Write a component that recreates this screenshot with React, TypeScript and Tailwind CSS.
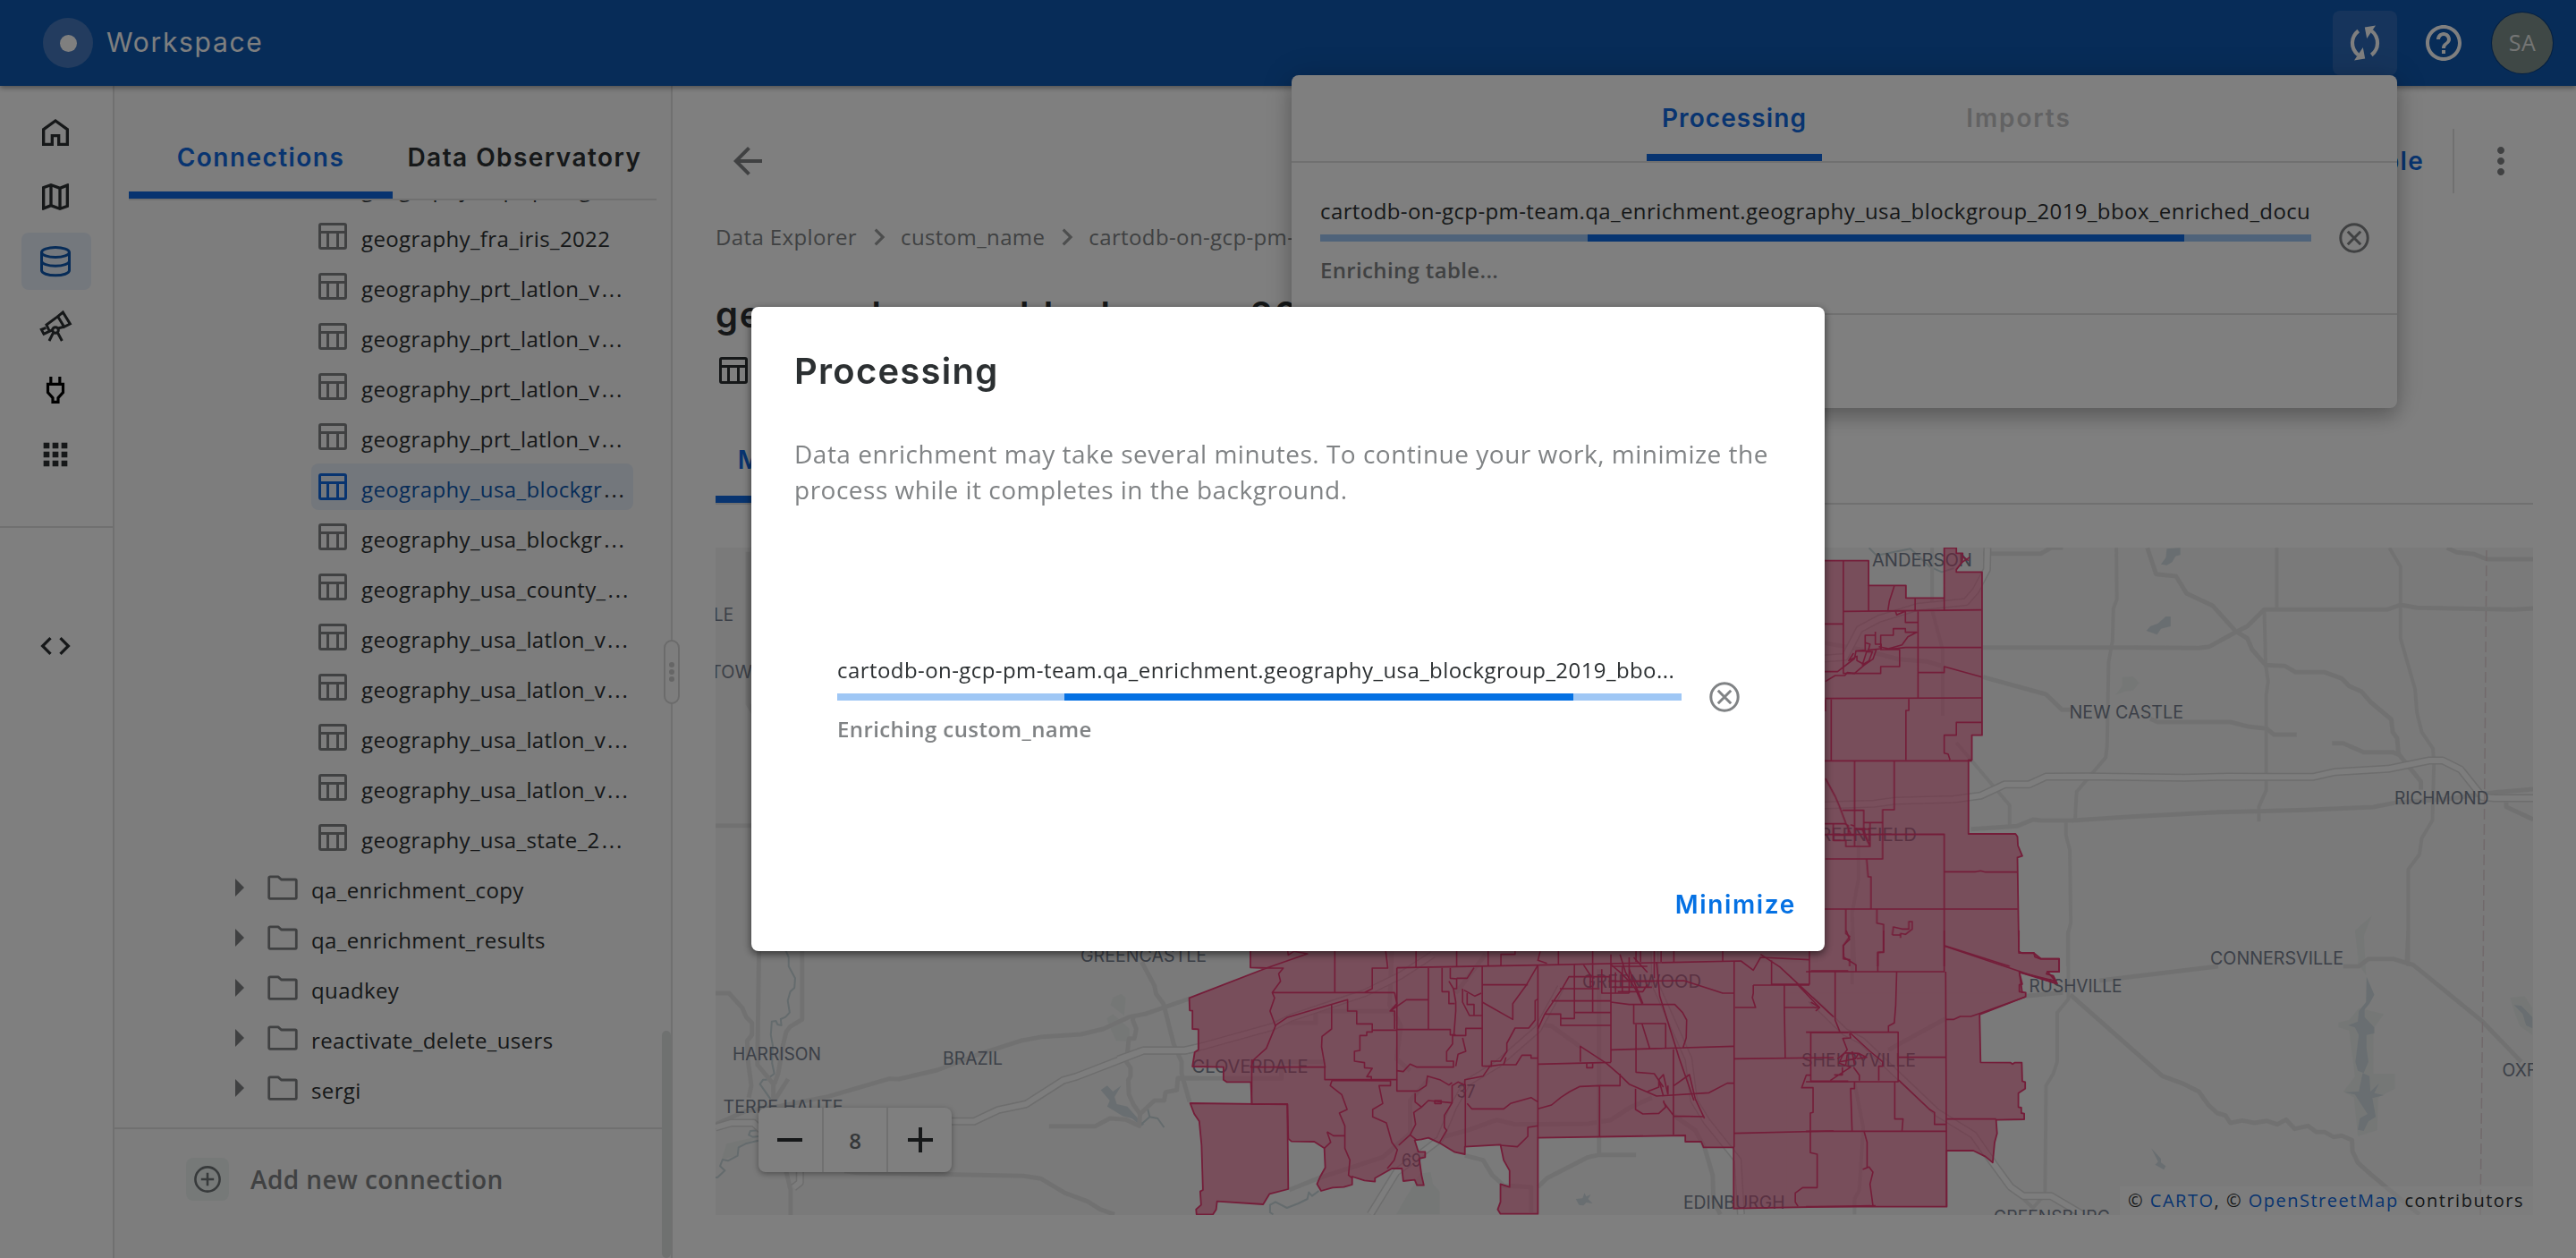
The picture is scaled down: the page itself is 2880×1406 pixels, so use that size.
import type { ReactNode } from 'react';

const P = {
  map: 'M20.5 3l-.16.03L15 5.1 9 3 3.36 4.9c-.21.07-.36.25-.36.48V20.5c0 .28.22.5.5.5l.16-.03L9 18.9l6 2.1 5.64-1.9c.21-.07.36-.25.36-.48V3.5c0-.28-.22-.5-.5-.5zM10 5.47l4 1.4v11.66l-4-1.4V5.47zm-5 .99l3-1.01v11.7l-3 1.16V6.46zm14 11.08l-3 1.01V6.86l3-1.16v11.84z',
  apps: 'M4 8h4V4H4v4zm6 12h4v-4h-4v4zm-6 0h4v-4H4v4zm0-6h4v-4H4v4zm6 0h4v-4h-4v4zm6-10v4h4V4h-4zm-6 4h4V4h-4v4zm6 6h4v-4h-4v4zm0 6h4v-4h-4v4z',
  code: 'M9.4 16.6L4.8 12l4.6-4.6L8 6l-6 6 6 6 1.4-1.4zm5.2 0l4.6-4.6-4.6-4.6L16 6l6 6-6 6-1.4-1.4z',
  help: 'M11 18h2v-2h-2v2zm1-16C6.48 2 2 6.48 2 12s4.48 10 10 10 10-4.48 10-10S17.52 2 12 2zm0 18c-4.41 0-8-3.59-8-8s3.59-8 8-8 8 3.59 8 8-3.59 8-8 8zm0-14c-2.21 0-4 1.79-4 4h2c0-1.1.9-2 2-2s2 .9 2 2c0 2-3 1.75-3 5h2c0-2.25 3-2.5 3-5 0-2.21-1.79-4-4-4z',
  back: 'M20 11H7.83l5.59-5.59L12 4l-8 8 8 8 1.41-1.41L7.83 13H20v-2z',
  chevron: 'M10 6L8.59 7.41 13.17 12l-4.58 4.59L10 18l6-6z',
  more: 'M12 8c1.1 0 2-.9 2-2s-.9-2-2-2-2 .9-2 2 .9 2 2 2zm0 2c-1.1 0-2 .9-2 2s.9 2 2 2 2-.9 2-2-.9-2-2-2zm0 6c-1.1 0-2 .9-2 2s.9 2 2 2 2-.9 2-2-.9-2-2-2z',
};

function Icon({ d, className }: { d: string; className: string }) {
  return (
    <svg viewBox="0 0 24 24" fill="currentColor" className={className}>
      <path d={d} />
    </svg>
  );
}

function CancelIcon() {
  return (
    <svg viewBox="0 0 40 40" fill="none" stroke="currentColor" strokeWidth="3" className="ml-7 mt-7 size-10 text-[#808385]">
      <circle cx="20" cy="20" r="15.200" />
      <path d="M12.800 12.800L27.200 27.200M27.200 12.800L12.800 27.200" />
    </svg>
  );
}

function TableIcon({ className }: { className: string }) {
  return (
    <svg viewBox="0 0 32 30" fill="none" stroke="currentColor" strokeWidth="3" className={className}>
      <rect x="1.5" y="1.5" width="29" height="27" rx="1.5" />
      <path d="M1.5 10.5H30.5M10.5 10.5V28.5M21.5 10.5V28.5" />
    </svg>
  );
}

function FolderIcon() {
  return (
    <svg viewBox="0 0 34 28" fill="none" stroke="currentColor" strokeWidth="2.8" strokeLinejoin="round" className="h-7 w-[34px] shrink-0 text-[#808385]">
      <path d="M3 1.9H12L15.5 5H31A1.3 1.3 0 0 1 32.3 6.3V25A1.3 1.3 0 0 1 31 26.3H3A1.3 1.3 0 0 1 1.7 25V3.2A1.3 1.3 0 0 1 3 1.9Z" />
    </svg>
  );
}

function RailItem({ children, active }: { children: ReactNode; active?: boolean }) {
  return (
    <div className="flex h-[72px] items-center pl-6">
      <div className={active ? 'flex h-16 w-[78px] items-center rounded-lg bg-[#e9f0fb] pl-[18px] text-[#0e58b0]' : 'flex h-16 w-[78px] items-center pl-[18px] text-[#2c3032]'}>
        {children}
      </div>
    </div>
  );
}

function Rail() {
  return (
    <nav className="w-32 shrink-0 border-r-2 border-[#e0e0e0] bg-white pt-4">
      <RailItem>
        <svg viewBox="0 0 24 24" fill="none" stroke="currentColor" strokeWidth="2" className="size-10">
          <path d="M4 20V10L12 4.2L20 10V20H14.2V14.2H9.8V20Z" />
        </svg>
      </RailItem>
      <RailItem>
        <Icon d={P.map} className="size-10" />
      </RailItem>
      <RailItem active>
        <svg viewBox="126 96 120 120" fill="none" stroke="currentColor" strokeWidth="9" className="size-10">
          <ellipse cx="186" cy="126" rx="46.500" ry="16.500" />
          <path d="M139.500 126V187A46.500 16.500 0 0 0 232.500 187V126M139.500 155A46.500 16.500 0 0 0 232.500 155" />
        </svg>
      </RailItem>
      <RailItem>
        <svg viewBox="126 312 120 120" fill="none" stroke="currentColor" strokeWidth="9" className="size-10">
          <path d="M194 341L211 327L235 366L215 376ZM194 341L156 369L166 391L177 386M196 380L215 376M154 379L139 385L147 400L165 391M178 397L165 423M194 397L208 423" />
          <circle cx="186" cy="387" r="10" />
        </svg>
      </RailItem>
      <RailItem>
        <svg viewBox="126 528 120 120" fill="none" stroke="#000" strokeWidth="9.500" className="size-10">
          <path d="M170.500 543V568M200.500 543V568M160.500 568H211.500V596L195 614V628H177V614L160.500 596Z" />
        </svg>
      </RailItem>
      <RailItem>
        <Icon d={P.apps} className="size-10" />
      </RailItem>
      <div className="mt-11 h-0.5 bg-[#e0e0e0]" />
      <div className="mt-24">
        <RailItem>
          <Icon d={P.code} className="size-10" />
        </RailItem>
      </div>
    </nav>
  );
}

const tables = [
  'geography_esp_ip_cog',
  'geography_fra_iris_2022',
  'geography_prt_latlon_v...',
  'geography_prt_latlon_v...',
  'geography_prt_latlon_v...',
  'geography_prt_latlon_v...',
  'geography_usa_blockgr...',
  'geography_usa_blockgr...',
  'geography_usa_county_...',
  'geography_usa_latlon_v...',
  'geography_usa_latlon_v...',
  'geography_usa_latlon_v...',
  'geography_usa_latlon_v...',
  'geography_usa_state_2...',
];
const folders = ['qa_enrichment_copy', 'qa_enrichment_results', 'quadkey', 'reactivate_delete_users', 'sergi'];

function Tree() {
  return (
    <aside className="relative flex w-[624px] shrink-0 flex-col border-r-2 border-[#e0e0e0] bg-[#fafafa]">
      <div className="ml-4 flex h-32 w-[590px] items-end border-b-2 border-[#e0e0e0] font-['Inter',sans-serif] text-[28px] font-semibold leading-10">
        <div className="h-[66px] w-[295px] border-b-8 border-[#1069e0] text-center tracking-[1.45px] text-[#1069e0]">Connections</div>
        <div className="h-[66px] w-[295px] text-center tracking-[1.45px] text-[#2c3032]">Data Observatory</div>
      </div>
      <div className="h-[1036px] overflow-hidden text-2xl tracking-[0.38px] text-[#2c3032]">
        <div className="-mt-11">
          {tables.map((t, i) => {
            const selected = i === 6;
            const cut = t.endsWith('...');
            return (
              <div key={i} className="flex h-14 items-center pl-[220px]">
                <div className={selected ? 'flex h-[52px] w-[360px] items-center gap-4 rounded-lg bg-[#e7eef8] pl-2' : 'flex h-[52px] w-[360px] items-center gap-4 pl-2'}>
                  <TableIcon className={selected ? 'h-[30px] w-8 shrink-0 text-[#1069e0]' : 'h-[30px] w-8 shrink-0 text-[#808385]'} />
                  <span className="mt-1.5 whitespace-nowrap leading-9">
                    <span className={selected ? 'text-[#0e58b0]' : ''}>{cut ? t.slice(0, -3) : t}</span>
                    {cut && <span className="ml-0.5 tracking-[1.9px]">...</span>}
                  </span>
                </div>
              </div>
            );
          })}
          {folders.map((f) => (
            <div key={f} className="flex h-14 items-center pl-[135px]">
              <div className="h-0 w-0 border-y-10 border-l-10 border-y-transparent border-l-[#808385]" />
              <div className="ml-[26px] flex items-center gap-[15px]">
                <FolderIcon />
                <span className="mt-1.5 leading-9">{f}</span>
              </div>
            </div>
          ))}
        </div>
      </div>
      <div className="h-0.5 shrink-0 bg-[#e0e0e0]" />
      <div className="mt-8 flex items-center pl-20">
        <div className="flex size-12 items-center justify-center rounded-lg bg-[#edf2f1] text-[#6f7577]">
          <svg viewBox="0 0 30 30" fill="none" stroke="currentColor" strokeWidth="2.6" className="size-[30px]">
            <circle cx="15" cy="15" r="13.600" />
            <path d="M15 7.800V22.200M7.800 15H22.200" />
          </svg>
        </div>
        <span className="ml-6 text-[28px] font-semibold leading-10 tracking-[0.42px] text-[#808385]">Add new connection</span>
      </div>
      <div className="absolute bottom-0 right-0 h-[254px] w-2.5 rounded-full bg-[#dfe2e1]" />
      <div className="absolute -right-2.5 top-[619px] z-10 flex h-[72px] w-[18px] flex-col items-center justify-center gap-0.5 rounded-full border-2 border-[#d6d6d6] bg-[#fafafa]">
        <div className="size-1.5 rounded-full bg-[#ccc]" />
        <div className="size-1.5 rounded-full bg-[#ccc]" />
        <div className="size-1.5 rounded-full bg-[#ccc]" />
      </div>
    </aside>
  );
}

/* Each map sheet is digitised on its own grid; the matrix places it on the shared canvas. */
const NE = 'matrix(0.5421 0 0 0.33333 2030 600)';
const SE = 'matrix(0.5421 0 0 0.33333 2030 1040)';
const SC = 'matrix(0.5102 0 0 0.33333 1250 1050)';
const SW = 'matrix(0.35714 0 0 0.33333 780 1040)';
const NW = 'matrix(0.8036 0 0 0.33333 800 600)';

const areas: [string, string][] = [
  [SC, 'M290 20V94L325 96L156 196L157 238L163 239V300L176 301V370L168 378L163 426L231 428V470L238 478H291L293 552H371L373 668L380 677L430 678L452 700L454 765L443 795L436 820L445 843L470 832L495 830L513 822V795L540 808L563 812V800L600 768H622L625 810L650 806L655 824H670L665 790L660 735L673 730V712H658L650 673L665 670L680 665L704 682L738 713L760 720V695L838 688L845 740L858 775V830L838 820V880L832 905L838 920H920V665L1243 657V678H1278L1283 697H1349V902L1660 893V20Z'],
  [SC, 'M158 549L371 553L373 837L332 853L318 888L217 878L215 905L208 922H172L171 905L182 890L180 845L186 840L183 690L178 610L167 585Z'],
  [SE, 'M-60 0H419V70L425 76H450L465 95H502V138H478L476 145L490 152L498 178L420 140L426 180L420 182V205L433 208V222L338 282L340 442L402 443L406 448L410 443H425L426 505L432 508V530L418 545V592L424 594V612L430 614V633L372 635L374 680L369 710L365 778L350 758L325 738H270V926L-60 926Z'],
  [NE, 'M-60 80H109V163H186V205H265V37H290V55H303L302 85L290 110V118H343V665H322V748H315V996H412L416 1005L417 1035L426 1070L416 1075L419 1395H450L452 1408L463 1415H502V1458H478L495 1490L420 1460L426 1530H-60Z'],
];

const borders: [string, string][] = [
  [SC, 'M370 20L373 52L385 40L415 48L325 96H362L352 115L356 140L338 178L343 196L333 240L345 290L325 365L298 402L291 428H453M475 20V178M338 178H606M585 20L591 96H557V165L540 178M293 402V552M453 428V470H611V95M611 95L920 86M653 20V92M742 20V90M811 20V88M839 88V50H870V20M680 95V302M611 302H728V320H740'],
  [SC, 'M343 290L370 262L503 202V240H523V283H557V304H611M468 220V300L447 325L446 360L454 430M606 178L611 215L596 240H606V300M596 240L632 202H680M557 304V310H545V322H530V372L518 375V408L540 413V430L557 432L545 460H555V470'],
  [SC, 'M611 440L625 443L640 418L655 428H735V408H720V376L733 350V322H762V298H798M798 90V424L818 425V408L838 408L852 375V348L870 297H900L914 270V205L920 200M798 152H898M798 210L865 268V215L895 152L920 86M735 165L740 210V240L736 320M755 330L762 375L745 385L740 425'],
  [SC, 'M728 95V130L742 132V165H735L725 140M710 95V175H725V215H738M755 165V210L770 255H798M758 170L782 190L796 180M765 180V218H780V255M780 95L765 130H742'],
  [SC, 'M469 472L597 474V490H572L580 550L558 570V595L588 615L600 680L612 705L605 740L590 768M469 472L465 490L490 520L502 570L485 582L497 625V700L508 740L505 790L513 800M458 645L466 680L452 700M458 645L472 658H497M611 470V508H657'],
  [SC, 'M657 508L675 490L678 458L705 470L725 488L732 480M651 515V545L665 562L680 540L732 548V490L745 478L760 488V470L800 458L815 425L838 420H872L885 388H905V398H920M665 562L648 580L652 620L640 655L615 690M732 548L715 590V630L720 640L704 682M640 655L655 673'],
  [SC, 'M761 485V695M765 550L775 568H845L860 550L905 530L920 545M838 690L875 695L898 660V630L920 625M920 86V665M920 86L1365 72L1392 103L1408 60L1515 68M845 420L850 395M694 540H708V550H694Z'],
  [SC, 'M920 418L1080 412M1080 84V412M920 300L935 250L975 160L988 125H1080M935 250H970V288H1080M970 265H1000V85M950 206H1080M968 165H1055M1000 245H1080M1040 85V245M1020 85L1035 120V160M1060 100V180H1120M1080 50V95'],
  [SC, 'M1013 410V358L1070 415L1100 455L1120 485L1180 525L1295 514L1335 482H1350M1027 415V430H1040V415M1100 450V490H1055L1012 493L990 510L970 530L950 555L920 568M1055 493V660'],
  [SC, 'M1080 370L1350 358M1080 84L1100 110L1120 140L1240 138L1295 165L1325 180H1350M1080 210L1120 218H1220L1237 245L1246 270L1245 330L1238 363M1120 100L1150 215M1100 50L1112 110L1135 170L1148 215M1130 215V282H1200V365M1148 282L1165 365M1135 285V445L1175 450L1195 495M1130 60L1160 110'],
  [SC, 'M1350 72V697M1350 400L1568 396M1217 368V655M1350 650L1568 642M1134 500V570L1150 585L1185 583L1200 562L1195 540M1195 525L1185 470L1195 453L1205 520M1205 490V520M1218 490L1252 453L1265 535L1285 600M1218 592L1285 594M1160 510L1185 495L1185 470M1195 545L1218 592'],
  [SC, 'M1082 90H1160M1090 110V180M1105 90V175M1120 60V180M1075 140H1175M1085 160H1170M1095 175H1150L1160 150M1180 75L1187 190L1230 400L1262 540M1175 20V130M1145 20V75M1190 20V75M1218 20V75M1325 20V72M1135 20V75M1040 20V85M965 20V85M925 40L920 70L940 80'],
  [SC, 'M1432 70V150H1515V20M1392 153H1515M1392 153V180L1390 195L1397 228H1352M1460 153V228H1537L1490 153M1460 228L1462 396M1518 312H1600M1518 312V475H1600M1408 50L1450 92L1568 260M1518 455H1508L1498 497H1523V580L1517 582V715L1532 720V832H1500L1484 850V880L1490 895M1518 105H1600'],
  [SE, 'M-20 138H265V0M265 52L495 178M63 0L70 30L57 50L58 90L83 115V137M140 0V72L128 74V137M40 138V300L50 340M167 138L165 250L162 310L150 320V338M-20 341H170V507M268 138L270 926M268 298H285L298 288H320L343 275L433 222M-20 507H170V425H268M70 345L72 360L56 362L65 400L55 420L48 445L72 458L30 503M72 345L112 405L138 440V455H130V503M45 430L60 410L88 412L82 430L50 440M55 458V484H38M78 458L90 485V503M65 415L62 450M75 405L80 450M88 412L105 425L85 430'],
  [SE, 'M-20 673H270M170 500L235 600L245 610V650H268M163 507V632H180L178 672M80 507V530H72L75 672M270 632H372M100 675L106 710V795L98 800L110 793L118 810L112 850L118 922M-10 240L8 258L0 270'],
  [NE, 'M0 292H57V80M57 250L343 245M109 163V248M162 165L152 215L149 246M205 205V246M265 205V245M211 250V540M57 292V458H134V435H173V378H134V330H160V308H185V320H208L190 335L178 362L150 375L130 368M185 250V287H210M164 246L167 262L184 250M211 455H265V435L343 470M145 378L185 371H343M20 542L343 540M32 545V750M192 542V582H186V748M18 751H322M343 622H290V665H265V725L273 728L277 748'],
  [NE, 'M18 452H45L80 408L83 383L102 380V330H123V318M123 318V360L135 360V375L108 380M20 485L40 465H60L65 455L80 458L100 430L118 410L125 378M78 390L68 415L85 400V415L97 425L105 385L117 385L110 415L95 430M85 383H108L112 360L102 355M20 545V585M20 655M303 65L315 80M302 85L318 68'],
  [NE, 'M80 752V917M162 750V915H138V958M20 810L40 870L48 900L55 930L62 960L72 995M18 962H60L67 968V1000H36V962M55 917H99V978H80V917M99 958H138V1080H20M72 965L80 970V1038H62V1018H36V1000H80M82 980L98 982L112 1038H80M82 980H112V1038M112 958V1000M112 1038L105 1015L96 982M18 998L265 997V1440M105 1082L108 1140H114V1246M18 1248H417M265 1123H330L340 1120L350 1124H416M62 1250V1330L70 1340L57 1370V1415L70 1418V1440M126 1250V1295L140 1300V1393H128V1440M158 1335L160 1308L178 1315H192V1290H199V1315L185 1333L175 1330V1345M158 1335H175M265 1370L400 1440'],
];

const roads: [string, string][] = [
  [NE, 'M345 56H465L485 37H510M345 470L475 528L508 580H525M345 371H655L790 373L812 368L868 318L890 300L925 244H1178L1206 228L1240 238L1440 244L1480 240M1302 37L1322 52L1358 58L1384 75H1480M320 980L415 970L448 948L465 951H530L650 938L830 923L1010 916L1150 906L1200 890L1300 880L1400 857L1480 846M1424 890V905L1480 948M868 318L890 340L900 378L928 430L968 433L990 454H1050L1085 475L1100 500L1125 518L1145 555L1187 612L1190 655L1199 675L1202 728L1248 820V848'],
  [NE, 'M684 37L702 125L743 132L765 190L818 230L866 316M690 610L705 621H855L895 637L930 643L945 663H992M1065 692H1088L1130 722H1190L1202 730M0 350L100 380L170 410L230 418L265 435M343 750'],
  [SE, 'M585 168L830 120M1088 120H1120L1140 95H1190L1232 115L1255 145L1375 305L1455 440M525 215L715 488L760 515L790 540L810 585L828 612L845 620L855 645L880 637L905 645L930 638L952 650L970 634L988 665L1015 655L1032 675L1050 676L1068 692L1085 688L1106 703L1107 740L1118 778L1145 818L1180 865L1245 952M433 220L510 208M150 400L268 295'],
  [SW, 'M56 650L150 605L240 592L410 556L600 497L630 498L750 468L880 415L1010 370L1080 356L1200 348L1270 330L1350 290L1400 280L1540 228M1100 656H1245L1290 630L1340 634L1382 655L1385 615L1430 570H1460L1465 542L1500 535L1503 495H1568M56 210H98L140 260L152 290L170 310V350L155 370L158 440L168 520L160 560M460 806L500 812L1020 823L1075 832L1150 880L1220 908L1260 935L1305 952'],
  [SW, 'M192 60L187 450L237 515V570M327 60V298L290 322L277 340L266 390L252 480L240 515M283 498L243 565M1390 105L1430 185L1435 212L1458 245L1490 380L1515 440V480L1540 575M1365 285L1362 300L1373 330L1367 362H1350L1342 440L1355 460V490L1348 500L1350 550L1365 585L1385 615M275 800L291 870V955'],
  [SC, 'M920 830L940 800L1030 730L1055 722H1135M760 724L800 740L820 790L845 825L905 830V915M920 285L950 290L1013 360M1285 697L1303 790L1305 880L1320 922M358 280H433V240H600M130 466H358V410H455M705 665L770 638L830 605L870 620L1030 618L1080 605L1120 565L1170 530M375 840L440 800L580 730L640 650V540L680 470M600 40L595 220L620 290L610 400L640 440M805 50L740 180M1054 100V720M1218 590L1265 640L1285 697'],
  [NW, 'M45 50V560L55 600M0 968H60'],
];
const thinRoads: [string, string][] = [
  [NE, 'M620 37L621 210L614 240L612 350L604 420L601 700L598 740L538 855L535 945M951 37V244M1183 37L1206 100V340L1236 510L1240 590L1250 655L1273 710L1275 760L1272 950L1250 1010L1245 1065L1222 1115V1440M925 244L928 430L933 485L929 530V850L914 905V955M240 37V245L262 380V600M290 690L400 900V970M516 950V1000L524 1050L526 1295L520 1330V1440M88 1000V1150L75 1260L80 1440'],
  [SE, 'M521 0V230L498 275V440L490 480L475 520L473 885L448 930L425 895M1222 0L1218 110M75 0V180M80 510L98 660L90 870L80 900V952'],
];
const highways: [string, string][] = [
  [NE, 'M18 408L60 403L90 310L130 275L210 235L310 218L330 180L353 110L354 37M18 900L120 895L165 885L285 880L340 868L390 830H440L475 804L560 803L760 808L850 804L1025 805L1072 788L1180 778L1265 750L1293 750L1330 780L1375 872L1400 876H1480'],
  [SE, 'M-10 230L60 340L95 370L250 610L325 685L365 778L402 860L428 890H485L550 952'],
  [SC, 'M0 402L55 372L145 372L180 360L340 292L380 262L540 180L620 120L690 50M1175 20L1177 150L1250 400L1262 540L1290 610L1358 740L1365 922M553 922L610 780L705 670L735 560L765 480L830 420L920 300L970 160'],
  [SW, 'M56 660L105 645H175L200 670M795 640H865L940 602L1028 582L1145 502L1185 490L1395 403H1525L1568 393M320 805V845L300 862'],
];
const waters: [string, string][] = [
  [NE, 'M724 40L752 37V60L742 65L735 85L724 95L712 92L722 70ZM722 267H732V300L712 308L704 328L682 315L690 300L706 290Z'],
  [SE, 'M1136 155L1152 215L1142 245L1132 265V290L1152 325V345L1136 350V395L1140 440L1130 478L1118 470L1113 440L1120 350L1112 325L1098 318L1118 305L1120 270L1135 240ZM1128 478L1142 488L1144 540L1162 512L1152 545L1172 552L1148 562L1155 625L1140 640L1130 672L1118 668L1122 630L1138 615L1122 575L1112 550L1090 542L1120 540ZM692 730L712 765V778L722 790L718 802L700 785L706 775ZM1440 250L1455 252L1478 290V328L1465 318L1458 280Z'],
  [SW, 'M1262 535L1282 520L1300 540L1326 520L1305 558L1312 582L1345 590L1378 630L1398 650L1388 656L1360 630L1330 622L1305 605L1282 590L1290 570L1270 545Z'],
  [SC, 'M1003 870L1018 868L1022 850L1026 862L1036 855L1030 870L1040 885L1026 882L1020 892L1010 890Z'],
];
const rivers: [string, string][] = [
  [SW, 'M275 65L285 90V120L305 160L303 192L290 205L282 235L288 275L275 290L260 297L262 318L250 315L245 303L232 305L229 350L235 385L233 445L240 480L215 500H205L195 515L228 565M190 670L165 672L160 685L172 692L190 690M190 704L150 715L128 727L125 755L95 772L78 768L70 790L85 805L62 828H56M1388 650L1415 625L1408 595M1415 625L1440 630L1460 660'],
  [SC, 'M440 843L425 860L418 848L415 870L395 885L370 900L345 880L333 890V915L340 922'],
  [NE, 'M110 37L125 62L150 55L195 40L235 100L260 118L285 105'],
];

const labels: [string, number, number, number][] = [
  ['ANDERSON', 2093, 633, 112],
  ['NEW CASTLE', 2313.5, 802.5, 127.5],
  ['RICHMOND', 2677, 898.5, 105.5],
  ['GREENFIELD', 2019, 939.5, 124],
  ['CONNERSVILLE', 2471, 1077.5, 149],
  ['RUSHVILLE', 2268.5, 1108.5, 104],
  ['OXFORD', 2797.5, 1202.5, 80],
  ['GREENSBURG', 2229, 1367, 130],
  ['SHELBYVILLE', 2014, 1192, 128],
  ['GREENWOOD', 1769, 1103.5, 133],
  ['CLOVERDALE', 1332.5, 1198.5, 130],
  ['GREENCASTLE', 1208, 1074.5, 141],
  ['37', 1628.5, 1227, 21],
  ['69', 1567, 1303.5, 22],
  ['EDINBURGH', 1882, 1351, 113.5],
  ['HARRISON', 819, 1185, 99],
  ['BRAZIL', 1054, 1190, 67],
  ['TERRE HAUTE', 808.5, 1244, 134],
  ['LE', 798, 694, 22],
  ['TOWN', 794, 757.5, 62],
];

function Lines({ items, width, color }: { items: [string, string][]; width: number; color: string }) {
  return (
    <g fill="none" stroke={color} strokeWidth={width} strokeLinejoin="round">
      {items.map(([m, d], i) => (
        <path key={i} transform={m} d={d} vectorEffect="non-scaling-stroke" />
      ))}
    </g>
  );
}

function Fills({ items, color, opacity }: { items: [string, string][]; color: string; opacity?: number }) {
  return (
    <g fill={color} opacity={opacity}>
      {items.map(([m, d], i) => (
        <path key={i} transform={m} d={d} />
      ))}
    </g>
  );
}

const outline: [string, string][] = [
  [SC, areas[0][1].replace('V20Z', '')],
  areas[1],
  [SE, areas[2][1].replace('M-60 0H419', 'M419 0').replace('L-60 926Z', 'H-20')],
  [NE, areas[3][1].replace('H-60Z', '')],
];

function MapCanvas() {
  return (
    <svg viewBox="800 612 2032 746" className="block h-[746px] w-[2032px]">
      <rect x="800" y="612" width="2032" height="746" fill="#f4f4f4" />
      <g fill="#ebefed">
        <path transform={SE} d="M1120 0H1130L1135 150L1118 110ZM1078 308L1100 300L1120 260L1172 280L1150 330L1150 480H1195V530L1160 560L1158 670L1118 690L1110 560L1088 540L1112 490L1100 335L1078 325ZM1432 225L1462 220L1478 260V350L1452 320L1440 270Z" />
        <path transform={NE} d="M632 470L655 468L667 490L655 515L638 518L618 530L632 500ZM1147 1270L1130 1340L1118 1410L1112 1320Z" />
        <path transform={SW} d="M1300 225L1325 212L1340 225L1335 285L1292 250ZM1280 295L1300 280L1352 330V372L1310 370L1295 335ZM75 768L90 715L190 690L130 730L120 755Z" />
        <path transform={SC} d="M645 830L660 785L685 780L690 820L705 845V922H610L625 880Z" />
      </g>
      <Fills items={waters} color="#d2dce2" />
      <Lines items={rivers} width={2} color="#c8d6da" />
      <Lines items={thinRoads} width={4} color="#e5e5e5" />
      <Lines items={roads} width={5} color="#e3e3e3" />
      <Lines items={highways} width={9} color="#dadada" />
      <Lines items={highways} width={6} color="#fafafa" />
      <path d="M2780 615L2776 1100L2773 1358" fill="none" stroke="#e2d3d6" strokeWidth="1.500" strokeDasharray="12 5" />
      <g fontFamily="Inter, sans-serif" fontSize="19.500" fill="#788190">
        {labels.map(([t, x, y, w]) => (
          <text key={t} x={x} y={y} textLength={w} lengthAdjust="spacingAndGlyphs">
            {t}
          </text>
        ))}
      </g>
      <Fills items={areas} color="#ec4478" opacity={0.5} />
      <Lines items={borders} width={1.6} color="#e83a72" />
      <Lines items={outline} width={1.8} color="#e83a72" />
    </svg>
  );
}

function Workarea() {
  return (
    <main className="flex min-w-0 flex-1 flex-col bg-white px-12 pt-12">
      <div className="flex h-[72px] items-center">
        <Icon d={P.back} className="ml-3 size-12 text-[#808385]" />
        <div className="ml-auto flex items-center">
          <span className="font-['Inter',sans-serif] text-[28px] font-semibold leading-10 tracking-[1.3px] text-[#1069e0]">Enrich table</span>
          <div className="ml-8 h-[72px] w-0.5 bg-[#e0e0e0]" />
          <Icon d={P.more} className="ml-7 mr-3 size-12 text-[#808385]" />
        </div>
      </div>
      <div className="mt-[31px] flex h-9 items-center whitespace-nowrap text-2xl leading-9 tracking-[0.38px] text-[#808385]">
        <span>Data Explorer</span>
        <Icon d={P.chevron} className="ml-1.5 mr-[5px] size-[38px] shrink-0 text-[#9a9c9d]" />
        <span>custom_name</span>
        <Icon d={P.chevron} className="ml-1.5 mr-[5px] size-[38px] shrink-0 text-[#9a9c9d]" />
        <span>cartodb-on-gcp-pm-team</span>
      </div>
      <h1 className="mt-[45px] whitespace-nowrap font-['Inter',sans-serif] text-[40px] font-semibold leading-[48px] tracking-[1.85px] text-[#2c3032]">
        geography_usa_blockgroup_2019_bbox_enriched_docu
      </h1>
      <div className="mt-[18px] flex h-10 items-center">
        <TableIcon className="ml-1 h-[30px] w-8 text-[#2c3032]" />
      </div>
      <div className="flex h-[130px] items-end border-b-2 border-[#e0e0e0]">
        <div className="h-[68px] w-28 border-b-8 border-[#1069e0] text-center font-['Inter',sans-serif] text-[28px] font-semibold leading-10 tracking-[1px] text-[#1069e0]">Map</div>
      </div>
      <div className="relative mt-12 h-[746px] w-[2032px] overflow-hidden">
        <MapCanvas />
        <div className="absolute bottom-12 left-12 flex h-[72px] w-[216px] rounded-lg bg-white text-[#2c3032] shadow-[0_2px_6px_rgba(0,0,0,0.35)]">
          <div className="flex flex-1 items-center justify-center border-r-2 border-[#e0e0e0]">
            <div className="h-1 w-7 bg-current" />
          </div>
          <div className="flex flex-1 items-center justify-center border-r-2 border-[#e0e0e0] pt-0.5 text-2xl font-semibold text-[#6b7073]">8</div>
          <div className="flex flex-1 items-center justify-center">
            <svg viewBox="0 0 28 28" stroke="currentColor" strokeWidth="4" className="size-7">
              <path d="M14 0V28M0 14H28" />
            </svg>
          </div>
        </div>
        <div className="absolute bottom-0 right-0 h-8 w-[462px] whitespace-nowrap bg-white/50 pl-[9px] text-xl leading-[31px] tracking-[1.5px] text-[#2c3032]">
          © <span className="text-[#1069e0]">CARTO</span>, © <span className="text-[#1069e0]">OpenStreetMap</span> contributors
        </div>
      </div>
    </main>
  );
}

function Header() {
  return (
    <header className="relative z-10 flex h-24 shrink-0 items-center bg-[#0e58b0] shadow-[0_2px_6px_rgba(0,0,0,0.4)]">
      <div className="ml-12 flex size-14 items-center justify-center rounded-full bg-[#4679be]">
        <div className="size-[19px] rounded-full bg-white" />
      </div>
      <span className="mb-[3px] ml-[15px] font-['Inter',sans-serif] text-[30px] leading-10 tracking-[1.7px] text-white">Workspace</span>
      <div className="ml-auto mr-6 flex items-center">
        <div className="flex size-[72px] items-center justify-center rounded-lg bg-[#2c69b8]">
          <svg viewBox="0 0 40 40" fill="none" stroke="#fff" strokeWidth="4.200" className="size-10">
            <path d="M12.700 6.500C4 13.500 3.500 26 12.500 33.500M27.300 33.500C36 26.500 36.500 14 27.500 6.500" />
            <path d="M17.800 25L20.200 37.500L8 39.500ZM22.200 15L19.800 2.500L32 0.500Z" fill="#fff" stroke="none" />
          </svg>
        </div>
        <Icon d={P.help} className="ml-7 size-12 text-white" />
        <div className="ml-[30px] mr-0.5 flex size-[68px] items-center justify-center rounded-full bg-[#7e908c] text-[25px] tracking-[0.5px] text-[#e8eae9] ring-1 ring-[#0a3f80]">SA</div>
      </div>
    </header>
  );
}

function ProgressPanel() {
  return (
    <section className="absolute left-[1444px] top-[84px] z-20 h-[372px] w-[1236px] rounded-lg bg-white shadow-[0_10px_20px_rgba(0,0,0,0.2),0_2px_36px_rgba(0,0,0,0.16)]">
      <div className="flex h-[98px] items-end gap-[120px] border-b-2 border-[#e0e0e0] pl-[397px] font-['Inter',sans-serif] text-[28px] font-semibold leading-10">
        <div className="h-[68px] w-[196px] border-b-8 border-[#1069e0] text-center tracking-[1.1px] text-[#1069e0]">Processing</div>
        <div className="h-[68px] w-[200px] text-center tracking-[1.9px] text-[#c4c5c6]">Imports</div>
      </div>
      <div className="flex h-[170px] border-b-2 border-[#e0e0e0] pl-8 pt-9">
        <div className="w-[1108px] whitespace-nowrap text-2xl leading-9 tracking-[0.4px]">
          <div className="text-[#2c3032]">cartodb-on-gcp-pm-team.qa_enrichment.geography_usa_blockgroup_2019_bbox_enriched_docu</div>
          <div className="mt-2 flex h-2 bg-[#9fc7f5]">
            <div className="ml-[299px] w-[667px] bg-[#0f6be2]" />
          </div>
          <div className="mt-3.5 font-semibold tracking-[0.35px] text-[#808385]">Enriching table...</div>
        </div>
        <CancelIcon />
      </div>
    </section>
  );
}

function ProcessingDialog() {
  return (
    <div className="absolute inset-0 z-30 bg-black/50">
      <section className="ml-[840px] mt-[343px] flex h-[720px] w-[1200px] flex-col rounded-lg bg-white px-12 shadow-[0_3px_10px_rgba(0,0,0,0.6)]">
        <h2 className="mt-12 font-['Inter',sans-serif] text-[40px] font-semibold leading-[48px] tracking-[1.25px] text-[#2c3032]">Processing</h2>
        <p className="mt-12 text-[28px] leading-10 tracking-[0.5px] text-[#808385]">
          Data enrichment may take several minutes. To continue your work, minimize the
          <br />
          process while it completes in the background.
        </p>
        <div className="ml-12 mt-[164px] flex">
          <div className="w-[944px] whitespace-nowrap text-2xl leading-9 tracking-[0.43px]">
            <div className="text-[#2c3032]">cartodb-on-gcp-pm-team.qa_enrichment.geography_usa_blockgroup_2019_bbo...</div>
            <div className="mt-2 flex h-2 bg-[#9fc7f5]">
              <div className="ml-[254px] w-[569px] bg-[#0571e3]" />
            </div>
            <div className="mt-3.5 font-semibold tracking-[0.4px] text-[#808385]">Enriching custom_name</div>
          </div>
          <CancelIcon />
        </div>
        <button className="-mr-4 mb-8 mt-auto self-end font-['Inter',sans-serif] text-[28px] font-semibold leading-10 tracking-[1.65px] text-[#0571e3]">Minimize</button>
      </section>
    </div>
  );
}

export default function App() {
  return (
    <div className="relative flex h-[1406px] w-[2880px] flex-col overflow-hidden bg-white font-['Open_Sans',sans-serif]">
      <Header />
      <div className="flex min-h-0 flex-1">
        <Rail />
        <Tree />
        <Workarea />
      </div>
      <ProgressPanel />
      <ProcessingDialog />
    </div>
  );
}
